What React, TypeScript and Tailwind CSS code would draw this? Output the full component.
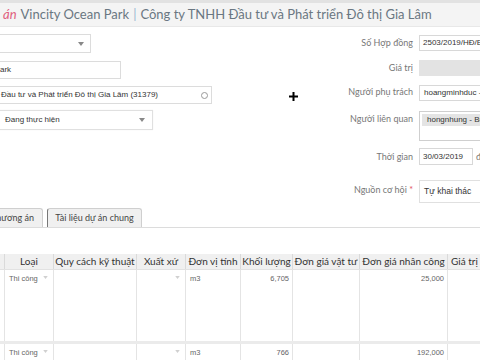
import React from "react";

const Caret = () => (
  <svg width="6" height="4" viewBox="0 0 6 4" className="shrink-0">
    <path d="M0 0 L6 0 L3 4 Z" fill="#888" />
  </svg>
);

const SmallCaret = () => (
  <svg width="5" height="3" viewBox="0 0 6 4" className="shrink-0">
    <path d="M0 0 L6 0 L3 4 Z" fill="#d0d0d0" />
  </svg>
);

const label = "text-right text-[#777] text-[9px] leading-none pr-[6px] whitespace-nowrap";
const lf = { fontFamily: 'Lato, "Open Sans", sans-serif' };
const af = { fontFamily: '"Liberation Sans", Arial, sans-serif' };

export default function App() {
  const cols = [
    { w: "w-[10px] justify-center", t: "" },
    { w: "w-[49px] justify-center", t: "Loại" },
    { w: "w-[83px] justify-center", t: "Quy cách kỹ thuật" },
    { w: "w-[49px] justify-center", t: "Xuất xứ" },
    { w: "w-[55px] justify-center", t: "Đơn vị tính" },
    { w: "w-[52px] justify-center", t: "Khối lượng" },
    { w: "w-[67px] justify-center", t: "Đơn giá vật tư" },
    { w: "w-[88px] justify-center", t: "Đơn giá nhân công" },
    { w: "w-[60px] justify-start pl-[3px]", t: "Giá trị" },
  ];
  const rows = [
    { h: "h-[74px]", kl: "6,705", nc: "25,000" },
    { h: "h-[20px]", kl: "766", nc: "192,000" },
  ];
  return (
    <div className="w-[480px] h-[360px] overflow-hidden bg-white relative" style={af}>
      {/* header band */}
      <div className="h-[3px] bg-[#e2e2e2]" />
      <div className="h-[24px] bg-[#f4f4f4] border-b border-[#e8e8e8] flex items-center pl-[3px] whitespace-nowrap overflow-hidden text-[13px] text-[#6a7782]" style={lf}>
        <span className="italic text-[#e0607e]">án</span>
        <span className="ml-[4px]">Vincity Ocean Park</span>
        <span className="mx-[4px] text-[#9ab8d0]">|</span>
        <span>Công ty TNHH Đầu tư và Phát triển Đô thị Gia Lâm</span>
      </div>

      {/* form */}
      <div className="flex h-[182px]">
        {/* left col */}
        <div className="w-[266px] shrink-0 flex flex-col ml-[-6px] pt-[7px] text-[8px] text-[#333]">
          <div className="w-[97px] h-[19px] border border-[#dcdcdc] flex items-center justify-end pr-[6px]">
            <Caret />
          </div>
          <div className="mt-[8px] w-[127px] h-[18px] border border-[#dcdcdc] flex items-center pl-[5px]">ark</div>
          <div className="mt-[7px] w-[218px] h-[18px] border border-[#dcdcdc] flex items-center pl-[6px] pr-[3px] justify-between whitespace-nowrap">
            <span>Đầu tư và Phát triển Đô thị Gia Lâm (31379)</span>
            <span className="w-[7px] h-[7px] rounded-full border border-[#999]" />
          </div>
          <div className="mt-[6px] w-[159px] h-[20px] border border-[#e0e0e0] flex items-center pl-[10px] pr-[7px] justify-between shadow-[0_0_1px_#eee]">
            <span>Đang thực hiện</span>
            <Caret />
          </div>
        </div>
        {/* right col */}
        <div className="flex-1 pt-[8px]">
          <div className="grid grid-cols-[159px_1fr] items-start" style={lf}>
            <div className={label + " pt-[3px]"}>Số Hợp đồng</div>
            <div className="h-[16px] border border-[#d8d8d8] flex items-center pl-[3px] text-[8px] text-[#333] whitespace-nowrap overflow-hidden" style={af}>2503/2019/HĐ/E</div>

            <div className={label + " mt-[9px] pt-[3px]"}>Giá trị</div>
            <div className="mt-[9px] h-[16px] bg-[#e3e3e3] border border-[#e3e3e3]" />

            <div className={label + " mt-[9px] pt-[2px]"}>Người phụ trách</div>
            <div className="mt-[9px] h-[16px] border border-[#d8d8d8] flex items-center pl-[4px] text-[8px] text-[#333] whitespace-nowrap overflow-hidden" style={af}>hoangminhduc -</div>

            <div className={label + " mt-[10px] pt-[3px]"}>Người liên quan</div>
            <div className="mt-[10px] h-[30px] border border-[#cfcfcf] pl-[2px] pt-[2px] overflow-hidden">
              <div className="h-[12px] bg-[#e4e4e4] pl-[5px] text-[8px] text-[#333] flex items-center whitespace-nowrap" style={af}>hongnhung - Bù</div>
            </div>

            <div className={label + " mt-[7px] pt-[4px]"}>Thời gian</div>
            <div className="mt-[7px] flex items-center">
              <div className="w-[54px] h-[17px] border border-[#d8d8d8] flex items-center pl-[3px] text-[8px] text-[#333]" style={af}>30/03/2019</div>
              <span className="ml-[3px] text-[9px] text-[#777]">đ</span>
            </div>

            <div className={label + " mt-[15px] pt-[5px]"}>
              Nguồn cơ hội <span className="text-[#e05060]">*</span>
            </div>
            <div className="mt-[15px] h-[23px] border border-[#e0e0e0] flex items-center pl-[4px] text-[8.5px] text-[#333]" style={af}>Tự khai thác</div>
          </div>
        </div>
      </div>

      {/* tabs */}
      <div className="flex items-end border-b border-[#dcdcdc] h-[19px] ml-[-8px] whitespace-nowrap" style={lf}>
        <div className="w-[51px] h-[19px] bg-[#f0f0f0] border border-b-0 border-[#cfcfcf] rounded-t-[3px] flex items-center justify-end pr-[8px] text-[9px] text-[#444]">hương án</div>
        <div className="ml-[4px] w-[95px] h-[19px] bg-[#f0f0f0] border border-b-0 border-[#cfcfcf] border-l-[#777] rounded-t-[3px] flex items-center justify-center text-[9px] text-[#444]">Tài liệu dự án chung</div>
      </div>

      {/* table */}
      <div className="mt-[26px] ml-[-5px]" style={lf}>
        <div className="flex h-[16px] bg-[#f0f0f0] border-b border-[#e2e2e2]">
          {cols.map((c, i) => (
            <div key={i} className={c.w + " shrink-0 border-r border-[#dadada] flex items-center text-[10px] text-[#333] whitespace-nowrap overflow-hidden"}>
              {c.t}
            </div>
          ))}
        </div>
        {rows.map((r, ri) => (
          <div key={ri} className={r.h + " flex border-b-[3px] border-[#ebebeb]"} style={af}>
            <div className="w-[10px] shrink-0 border-r border-[#e4e4e4]" />
            <div className="w-[49px] shrink-0 border-r border-[#e4e4e4] flex items-start justify-between pl-[4px] pr-[5px] pt-[3px] text-[7.5px] text-[#666]">
              <span>Thi công</span>
              <span className="mt-[3px]"><SmallCaret /></span>
            </div>
            <div className="w-[83px] shrink-0 border-r border-[#e4e4e4]" />
            <div className="w-[49px] shrink-0 border-r border-[#e4e4e4] flex justify-end pr-[5px] pt-[6px]">
              <SmallCaret />
            </div>
            <div className="w-[55px] shrink-0 border-r border-[#e4e4e4] pl-[4px] pt-[3px] text-[7.5px] text-[#666]">m3</div>
            <div className="w-[52px] shrink-0 border-r border-[#e4e4e4] text-right pr-[3px] pt-[3px] text-[7.5px] text-[#666]">{r.kl}</div>
            <div className="w-[67px] shrink-0 border-r border-[#e4e4e4]" />
            <div className="w-[88px] shrink-0 border-r border-[#e4e4e4] text-right pr-[3px] pt-[3px] text-[7.5px] text-[#666]">{r.nc}</div>
            <div className="w-[60px] shrink-0" />
          </div>
        ))}
      </div>

      {/* cursor */}
      <svg className="absolute left-[289px] top-[92px]" width="9" height="9" viewBox="0 0 9 9">
        <path d="M4.5 0 V9 M0 4.5 H9" stroke="#000" strokeWidth="2" />
      </svg>
    </div>
  );
}
